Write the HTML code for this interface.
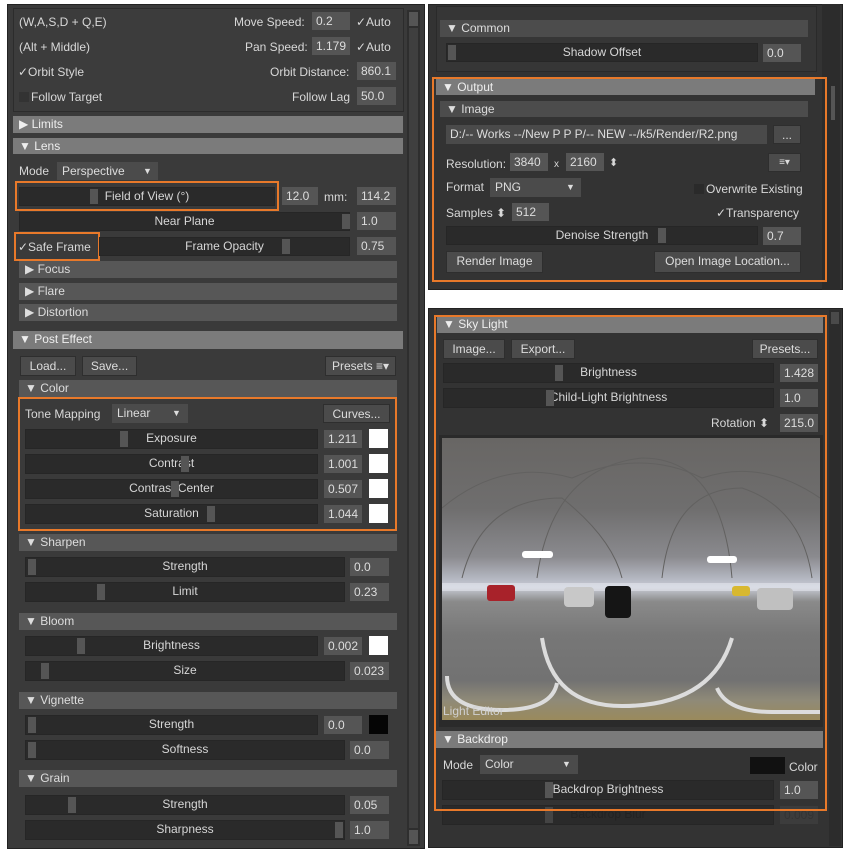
<!DOCTYPE html>
<html><head><meta charset="utf-8"><style>
*{box-sizing:border-box;margin:0;padding:0}
body{width:853px;height:856px;background:#fff;position:relative;overflow:hidden;font-family:"Liberation Sans",sans-serif;font-size:12px;color:#d8d8d8}
div{position:absolute}
.t{white-space:nowrap;line-height:18px}
.sl{background:#2a2a2a;border:1px solid #262626;text-align:center;line-height:17px;color:#d6d6d6}
.h{background:#555;position:absolute;top:1px;bottom:1px;width:8px}
.v{background:#555;line-height:18px;padding-left:4px;color:#ddd}
.hd{background:#575757;line-height:17px;padding-left:6px;color:#ddd}
.hl{background:#7b7b7b;line-height:16px;padding-left:6px;color:#eee}
.btn{background:#4b4b4b;border:1px solid #2e2e2e;text-align:center;line-height:18px;color:#ddd}
.dd{background:#4b4b4b;line-height:18px;padding-left:5px;color:#ddd}
.or{border:2px solid #e8792a}
.sw{background:#fff}
</style></head><body>

<!-- LEFT PANEL -->
<div style="left:7px;top:4px;width:418px;height:845px;background:#3a3a3a;border:1px solid #222"></div>
<div style="left:13px;top:8px;width:391px;height:104px;background:#3c3c3c;border:1px solid #2c2c2c"></div>
<div style="left:407px;top:10px;width:13px;height:836px;background:#2e2e2e"></div>
<div style="left:409px;top:12px;width:9px;height:14px;background:#555"></div>
<div style="left:409px;top:28px;width:9px;height:800px;background:#3f3f3f"></div>
<div style="left:409px;top:830px;width:9px;height:14px;background:#555"></div>

<div class="t" style="left:19px;top:13px">(W,A,S,D + Q,E)</div>
<div class="t" style="left:234px;top:13px">Move Speed:</div>
<div class="v" style="left:312px;top:12px;width:38px;height:18px">0.2</div>
<div class="t" style="left:356px;top:13px">✓Auto</div>
<div class="t" style="left:19px;top:38px">(Alt + Middle)</div>
<div class="t" style="left:245px;top:38px">Pan Speed:</div>
<div class="v" style="left:312px;top:37px;width:38px;height:18px">1.179</div>
<div class="t" style="left:356px;top:38px">✓Auto</div>
<div class="t" style="left:18px;top:63px">✓Orbit Style</div>
<div class="t" style="left:270px;top:63px">Orbit Distance:</div>
<div class="v" style="left:357px;top:62px;width:39px;height:18px">860.1</div>
<div style="left:19px;top:92px;width:10px;height:10px;background:#333"></div>
<div class="t" style="left:31px;top:88px">Follow Target</div>
<div class="t" style="left:292px;top:88px">Follow Lag</div>
<div class="v" style="left:357px;top:87px;width:39px;height:18px">50.0</div>

<div class="hl" style="left:13px;top:116px;width:390px;height:17px">▶ Limits</div>
<div class="hl" style="left:13px;top:138px;width:390px;height:16px">▼ Lens</div>
<div class="t" style="left:19px;top:162px">Mode</div>
<div class="dd" style="left:57px;top:162px;width:101px;height:18px">Perspective<span style="position:absolute;left:86px;font-size:9px">▼</span></div>
<div class="sl" style="left:19px;top:187px;width:256px;height:19px"><div class="h" style="left:70px"></div>Field of View (°)</div>
<div class="or" style="left:15px;top:181px;width:264px;height:30px"></div>
<div class="v" style="left:282px;top:187px;width:36px;height:18px">12.0</div>
<div class="t" style="left:324px;top:188px">mm:</div>
<div class="v" style="left:357px;top:187px;width:39px;height:18px">114.2</div>
<div class="sl" style="left:19px;top:212px;width:331px;height:19px"><div class="h" style="left:322px"></div>Near Plane</div>
<div class="v" style="left:357px;top:212px;width:39px;height:18px">1.0</div>
<div class="t" style="left:18px;top:238px">✓Safe Frame</div>
<div class="or" style="left:14px;top:232px;width:86px;height:29px"></div>
<div class="sl" style="left:99px;top:237px;width:251px;height:19px"><div class="h" style="left:182px"></div>Frame Opacity</div>
<div class="v" style="left:357px;top:237px;width:39px;height:18px">0.75</div>
<div class="hd" style="left:19px;top:261px;width:378px;height:17px">▶ Focus</div>
<div class="hd" style="left:19px;top:283px;width:378px;height:17px">▶ Flare</div>
<div class="hd" style="left:19px;top:304px;width:378px;height:17px">▶ Distortion</div>

<div class="hl" style="left:13px;top:331px;width:390px;height:18px">▼ Post Effect</div>
<div class="btn" style="left:20px;top:356px;width:56px;height:20px">Load...</div>
<div class="btn" style="left:82px;top:356px;width:55px;height:20px">Save...</div>
<div class="btn" style="left:325px;top:356px;width:71px;height:20px">Presets ≡▾</div>
<div class="hd" style="left:19px;top:380px;width:378px;height:17px">▼ Color</div>
<div class="t" style="left:25px;top:405px">Tone Mapping</div>
<div class="dd" style="left:112px;top:404px;width:76px;height:19px">Linear<span style="position:absolute;left:60px;font-size:9px">▼</span></div>
<div class="btn" style="left:323px;top:404px;width:67px;height:19px">Curves...</div>
<div class="sl" style="left:25px;top:429px;width:293px;height:20px"><div class="h" style="left:94px"></div>Exposure</div>
<div class="v" style="left:324px;top:430px;width:38px;height:18px">1.211</div><div class="sw" style="left:369px;top:429px;width:19px;height:19px"></div>
<div class="sl" style="left:25px;top:454px;width:293px;height:20px"><div class="h" style="left:155px"></div>Contrast</div>
<div class="v" style="left:324px;top:455px;width:38px;height:18px">1.001</div><div class="sw" style="left:369px;top:454px;width:19px;height:19px"></div>
<div class="sl" style="left:25px;top:479px;width:293px;height:20px"><div class="h" style="left:145px"></div>Contrast Center</div>
<div class="v" style="left:324px;top:480px;width:38px;height:18px">0.507</div><div class="sw" style="left:369px;top:479px;width:19px;height:19px"></div>
<div class="sl" style="left:25px;top:504px;width:293px;height:20px"><div class="h" style="left:181px"></div>Saturation</div>
<div class="v" style="left:324px;top:505px;width:38px;height:18px">1.044</div><div class="sw" style="left:369px;top:504px;width:19px;height:19px"></div>
<div class="or" style="left:18px;top:397px;width:379px;height:134px"></div>

<div class="hd" style="left:19px;top:534px;width:378px;height:17px">▼ Sharpen</div>
<div class="sl" style="left:25px;top:557px;width:320px;height:20px"><div class="h" style="left:2px"></div>Strength</div>
<div class="v" style="left:350px;top:558px;width:39px;height:18px">0.0</div>
<div class="sl" style="left:25px;top:582px;width:320px;height:20px"><div class="h" style="left:71px"></div>Limit</div>
<div class="v" style="left:350px;top:583px;width:39px;height:18px">0.23</div>

<div class="hd" style="left:19px;top:613px;width:378px;height:17px">▼ Bloom</div>
<div class="sl" style="left:25px;top:636px;width:293px;height:20px"><div class="h" style="left:51px"></div>Brightness</div>
<div class="v" style="left:324px;top:637px;width:38px;height:18px">0.002</div><div class="sw" style="left:369px;top:636px;width:19px;height:19px"></div>
<div class="sl" style="left:25px;top:661px;width:320px;height:20px"><div class="h" style="left:15px"></div>Size</div>
<div class="v" style="left:350px;top:662px;width:39px;height:18px">0.023</div>

<div class="hd" style="left:19px;top:692px;width:378px;height:17px">▼ Vignette</div>
<div class="sl" style="left:25px;top:715px;width:293px;height:20px"><div class="h" style="left:2px"></div>Strength</div>
<div class="v" style="left:324px;top:716px;width:38px;height:18px">0.0</div><div style="left:369px;top:715px;width:19px;height:19px;background:#050505"></div>
<div class="sl" style="left:25px;top:740px;width:320px;height:20px"><div class="h" style="left:2px"></div>Softness</div>
<div class="v" style="left:350px;top:741px;width:39px;height:18px">0.0</div>

<div class="hd" style="left:19px;top:770px;width:378px;height:17px">▼ Grain</div>
<div class="sl" style="left:25px;top:795px;width:320px;height:20px"><div class="h" style="left:42px"></div>Strength</div>
<div class="v" style="left:350px;top:796px;width:39px;height:18px">0.05</div>
<div class="sl" style="left:25px;top:820px;width:320px;height:20px"><div class="h" style="left:309px"></div>Sharpness</div>
<div class="v" style="left:350px;top:821px;width:39px;height:18px">1.0</div>

<!-- RIGHT TOP PANEL -->
<div style="left:428px;top:4px;width:415px;height:286px;background:#333;border:1px solid #222"></div>
<div style="left:436px;top:6px;width:381px;height:66px;border:1px solid #2a2a2a;background:#363636"></div>
<div style="left:822px;top:4px;width:18px;height:286px;background:#2c2c2c"></div>
<div style="left:831px;top:86px;width:4px;height:34px;background:#555"></div>
<div class="hd" style="left:440px;top:20px;width:368px;height:17px;background:#4c4c4c">▼ Common</div>
<div class="sl" style="left:446px;top:43px;width:312px;height:19px"><div class="h" style="left:1px"></div>Shadow Offset</div>
<div class="v" style="left:763px;top:44px;width:38px;height:18px">0.0</div>
<div class="hl" style="left:436px;top:79px;width:379px;height:16px">▼ Output</div>
<div class="hd" style="left:440px;top:101px;width:368px;height:16px;background:#4c4c4c">▼ Image</div>
<div class="v" style="left:446px;top:125px;width:321px;height:19px;background:#4a4a4a">D:/-- Works --/New P P P/-- NEW --/k5/Render/R2.png</div>
<div class="btn" style="left:773px;top:125px;width:28px;height:19px">...</div>
<div class="t" style="left:446px;top:155px">Resolution:</div>
<div class="v" style="left:510px;top:153px;width:38px;height:18px">3840</div>
<div class="t" style="left:554px;top:156px;font-size:10px">x</div>
<div class="v" style="left:566px;top:153px;width:38px;height:18px">2160</div>
<div class="t" style="left:609px;top:154px;font-size:11px">⬍</div>
<div class="btn" style="left:768px;top:153px;width:33px;height:19px;font-size:10px">≡▾</div>
<div class="t" style="left:446px;top:178px">Format</div>
<div class="dd" style="left:490px;top:178px;width:91px;height:19px">PNG<span style="position:absolute;left:76px;font-size:9px">▼</span></div>
<div style="left:694px;top:184px;width:10px;height:10px;background:#2a2a2a"></div>
<div class="t" style="left:706px;top:180px">Overwrite Existing</div>
<div class="t" style="left:446px;top:204px">Samples ⬍</div>
<div class="v" style="left:512px;top:203px;width:37px;height:18px">512</div>
<div class="t" style="left:716px;top:204px">✓Transparency</div>
<div class="sl" style="left:446px;top:226px;width:312px;height:19px"><div class="h" style="left:211px"></div>Denoise Strength</div>
<div class="v" style="left:763px;top:227px;width:38px;height:18px">0.7</div>
<div class="btn" style="left:446px;top:251px;width:97px;height:22px">Render Image</div>
<div class="btn" style="left:654px;top:251px;width:147px;height:22px">Open Image Location...</div>
<div class="or" style="left:432px;top:77px;width:395px;height:205px"></div>

<!-- RIGHT BOTTOM PANEL -->
<div style="left:428px;top:308px;width:415px;height:540px;background:#333;border:1px solid #222"></div>
<div style="left:829px;top:310px;width:12px;height:536px;background:#2c2c2c"></div>
<div style="left:831px;top:312px;width:8px;height:12px;background:#4a4a4a"></div>
<div class="hl" style="left:437px;top:316px;width:386px;height:17px">▼ Sky Light</div>
<div class="btn" style="left:443px;top:339px;width:62px;height:20px">Image...</div>
<div class="btn" style="left:511px;top:339px;width:64px;height:20px">Export...</div>
<div class="btn" style="left:752px;top:339px;width:66px;height:20px">Presets...</div>
<div class="sl" style="left:443px;top:363px;width:331px;height:20px"><div class="h" style="left:111px"></div>Brightness</div>
<div class="v" style="left:780px;top:364px;width:38px;height:18px">1.428</div>
<div class="sl" style="left:443px;top:388px;width:331px;height:20px"><div class="h" style="left:102px"></div>Child-Light Brightness</div>
<div class="v" style="left:780px;top:389px;width:38px;height:18px">1.0</div>
<div class="t" style="left:711px;top:414px">Rotation ⬍</div>
<div class="v" style="left:780px;top:414px;width:38px;height:18px">215.0</div>
<div style="left:439px;top:435px;width:384px;height:292px;background:#2a2a2a"></div>
<div style="left:442px;top:438px;width:378px;height:282px;overflow:hidden;background:linear-gradient(#686664 0%,#6f6e6e 25%,#8a8a8e 42%,#b5b8c2 50%,#c9ccd6 53%,#8a8a8a 58%,#777 70%,#727272 86%,#8f8a78 93%,#9a8a5c 100%)">
<svg width="378" height="282" style="position:absolute;left:0;top:0">
<g fill="none" stroke="#626160" stroke-width="1">
<path d="M0 70 Q60 20 130 40 Q200 10 260 40 Q320 20 378 60"/>
<path d="M95 140 Q110 30 200 20 Q280 20 290 140"/>
<path d="M20 140 Q40 60 120 60 Q170 100 180 140"/>
<path d="M220 140 Q230 50 300 50 Q360 70 370 140"/>
</g>
<rect x="80" y="113" width="31" height="7" rx="3" fill="#fff"/>
<rect x="265" y="118" width="30" height="7" rx="3" fill="#fff"/>
<rect x="0" y="145" width="378" height="8" fill="#e8ebf3" opacity=".55"/>
<rect x="45" y="147" width="28" height="16" rx="3" fill="#a8222a"/>
<rect x="122" y="149" width="30" height="20" rx="4" fill="#c8c8c8"/>
<rect x="163" y="148" width="26" height="32" rx="4" fill="#151515"/>
<rect x="315" y="150" width="36" height="22" rx="4" fill="#c0c0c0"/>
<rect x="290" y="148" width="18" height="10" rx="3" fill="#d8b830"/>
<g fill="none" stroke="#dcdcdc" stroke-width="4">
<path d="M100 200 Q110 268 180 268 Q270 268 290 200"/>
<path d="M5 238 Q5 272 60 272 Q110 272 115 245"/>
<path d="M275 250 Q285 274 330 274 L378 274"/>
</g>
</svg>
<div class="t" style="left:1px;top:264px;color:#d0d0d0;font-size:12px">Light Editor</div>
</div>
<div class="hl" style="left:436px;top:731px;width:387px;height:17px">▼ Backdrop</div>
<div class="t" style="left:443px;top:756px">Mode</div>
<div class="dd" style="left:480px;top:755px;width:98px;height:19px">Color<span style="position:absolute;left:82px;font-size:9px">▼</span></div>
<div style="left:750px;top:757px;width:35px;height:17px;background:#111"></div>
<div class="t" style="left:789px;top:758px">Color</div>
<div class="sl" style="left:442px;top:780px;width:332px;height:20px"><div class="h" style="left:102px"></div>Backdrop Brightness</div>
<div class="v" style="left:780px;top:781px;width:38px;height:18px">1.0</div>
<div class="sl" style="left:442px;top:805px;width:332px;height:20px;color:#222"><div class="h" style="left:102px;background:#444"></div>Backdrop Blur</div>
<div class="v" style="left:780px;top:806px;width:38px;height:18px;background:#3c3c3c;color:#333">0.009</div>
<div class="or" style="left:434px;top:315px;width:393px;height:496px"></div>
</body></html>
